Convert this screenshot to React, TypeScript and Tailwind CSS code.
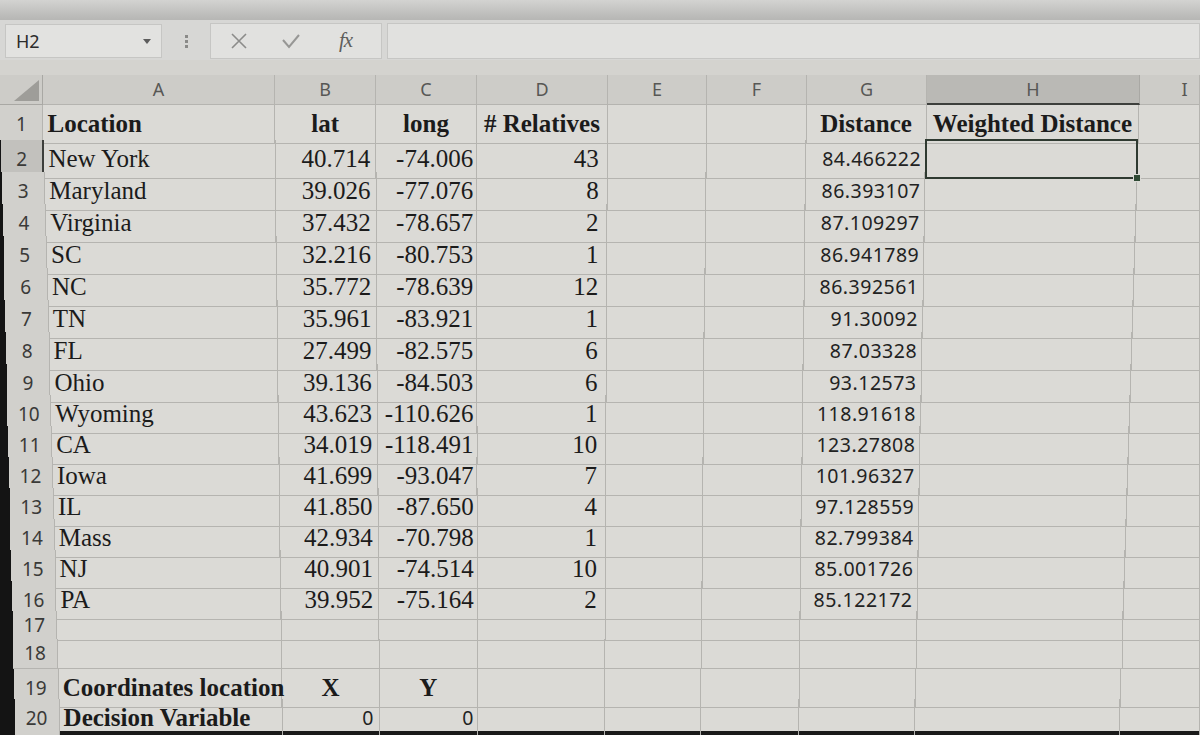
import React from "react";

type Row = {
  n: number;
  h: number;
  a?: string;
  b?: string;
  c?: string;
  d?: string;
  g?: string;
  hh?: string;
  kind?: "head" | "data" | "xy" | "zero";
};

const rows: Row[] = [
  { n: 1, h: 35, a: "Location", b: "lat", c: "long", d: "# Relatives", g: "Distance", hh: "Weighted Distance", kind: "head" },
  { n: 2, h: 32, a: "New York", b: "40.714", c: "-74.006", d: "43", g: "84.466222" },
  { n: 3, h: 32, a: "Maryland", b: "39.026", c: "-77.076", d: "8", g: "86.393107" },
  { n: 4, h: 32, a: "Virginia", b: "37.432", c: "-78.657", d: "2", g: "87.109297" },
  { n: 5, h: 32, a: "SC", b: "32.216", c: "-80.753", d: "1", g: "86.941789" },
  { n: 6, h: 32, a: "NC", b: "35.772", c: "-78.639", d: "12", g: "86.392561" },
  { n: 7, h: 32, a: "TN", b: "35.961", c: "-83.921", d: "1", g: "91.30092" },
  { n: 8, h: 32, a: "FL", b: "27.499", c: "-82.575", d: "6", g: "87.03328" },
  { n: 9, h: 31, a: "Ohio", b: "39.136", c: "-84.503", d: "6", g: "93.12573" },
  { n: 10, h: 31, a: "Wyoming", b: "43.623", c: "-110.626", d: "1", g: "118.91618" },
  { n: 11, h: 31, a: "CA", b: "34.019", c: "-118.491", d: "10", g: "123.27808" },
  { n: 12, h: 31, a: "Iowa", b: "41.699", c: "-93.047", d: "7", g: "101.96327" },
  { n: 13, h: 31, a: "IL", b: "41.850", c: "-87.650", d: "4", g: "97.128559" },
  { n: 14, h: 31, a: "Mass", b: "42.934", c: "-70.798", d: "1", g: "82.799384" },
  { n: 15, h: 31, a: "NJ", b: "40.901", c: "-74.514", d: "10", g: "85.001726" },
  { n: 16, h: 30, a: "PA", b: "39.952", c: "-75.164", d: "2", g: "85.122172" },
  { n: 17, h: 28 },
  { n: 18, h: 30 },
  { n: 19, h: 30, a: "Coordinates location", b: "X", c: "Y", kind: "xy" },
  { n: 20, h: 32, a: "Decision Variable", b: "0", c: "0", kind: "zero" },
];

// the photo is taken at an angle, so column lines drift a little from top to bottom
const topEdges = [0, 43, 275, 376, 477, 608, 707, 807, 927, 1140, 1200];
const botEdges = [15, 60, 283, 380, 478, 605, 701, 799, 915, 1120, 1200];

const colsAt = (y: number) => {
  const t = Math.min(1, Math.max(0, (y - 105) / 625));
  const e = topEdges.map((a, i) => a + (botEdges[i] - a) * t);
  const w = e.map((v, i) => (i === 0 ? v : v - e[i - 1]));
  return w.map((v) => `${v.toFixed(1)}px`).join(" ");
};

const serif = "font-['Liberation_Serif','Times_New_Roman',serif] text-[25px] text-[#1b1b1b]";
const sans = "font-['Noto_Sans',sans-serif] text-[19.5px] tracking-[0.5px] text-[#222]";
const line = "border-r border-b border-[#b5b4b0]";

const Cell = ({ className = "", children }: { className?: string; children?: React.ReactNode }) => (
  <div className={`${line} flex items-center overflow-visible whitespace-nowrap ${className}`}>{children}</div>
);

const ColHeader = () => {
  const letters = ["A", "B", "C", "D", "E", "F", "G", "H", "I"];
  return (
    <div className="grid h-[30px] bg-[#cdccc8]" style={{ gridTemplateColumns: colsAt(90) }}>
      <div />
      <div className="relative border-r border-b border-[#a9a8a4]">
        <svg className="absolute right-[3px] bottom-[3px]" width="25" height="21" viewBox="0 0 25 21">
          <polygon points="25,0 25,21 0,21" fill="#9e9d99" />
        </svg>
      </div>
      {letters.map((l) => (
        <div
          key={l}
          className={`flex items-center justify-center font-['Noto_Sans',sans-serif] text-[18px] text-[#575755] ${
            l === "H"
              ? "bg-[#bab9b5] border-r border-[#a9a8a4] border-b-2 border-b-[#3d3f3c]"
              : "border-r border-b border-[#b5b4b0]"
          } ${l === "I" ? "pl-[30px]" : ""}`}
        >
          {l}
        </div>
      ))}
    </div>
  );
};

const bezelFor = (n: number) => (n < 2 ? "bg-[#d2d1cd]" : "bg-[#141414]");

export default function App() {
  let y = 105;
  return (
    <div className="w-[1200px] h-[735px] overflow-hidden bg-[#1a1a1a] select-none">
      {/* ribbon bottom edge */}
      <div className="h-[20px] bg-gradient-to-b from-[#d3d3d1] via-[#c4c4c2] to-[#b6b6b4]" />

      {/* formula bar */}
      <div className="h-[40px] bg-[#d7d7d5] flex items-start pt-[4px]">
        <div className="ml-[5px] w-[157px] h-[34px] bg-[#e2e2e0] border border-[#c6c6c4] flex items-center justify-between pl-[10px] pr-[10px]">
          <span className="font-['Noto_Sans',sans-serif] text-[18px] text-[#2c2c2c]">H2</span>
          <svg width="8" height="5" viewBox="0 0 8 5">
            <polygon points="0,0 8,0 4,5" fill="#5c5c5c" />
          </svg>
        </div>
        <div className="w-[48px] h-[34px] flex flex-col items-center justify-center gap-[2px]">
          <span className="w-[3px] h-[3px] bg-[#8a8a88]" />
          <span className="w-[3px] h-[3px] bg-[#8a8a88]" />
          <span className="w-[3px] h-[3px] bg-[#8a8a88]" />
        </div>
        <div className="w-[172px] h-[36px] -mt-[1px] bg-[#e1e1df] border border-[#c6c6c4] flex items-center">
          <svg className="ml-[18px]" width="20" height="20" viewBox="0 0 20 20">
            <path d="M3 3 L17 17 M17 3 L3 17" stroke="#8c8c8a" strokeWidth="1.6" fill="none" />
          </svg>
          <svg className="ml-[32px]" width="20" height="18" viewBox="0 0 20 18">
            <path d="M2 8 L8 15 L18 3" stroke="#979795" strokeWidth="2" fill="none" />
          </svg>
          <span className="ml-[38px] font-['Liberation_Serif',serif] italic text-[21px] text-[#5e5e5c] tracking-[-1px]">fx</span>
        </div>
        <div className="ml-[5px] flex-1 h-[36px] -mt-[1px] bg-[#e1e1df] border border-[#c6c6c4]" />
      </div>

      <div className="h-[15px] bg-[#d4d3cf]" />

      <ColHeader />

      {rows.map((r) => {
        const mid = y + r.h / 2;
        y += r.h;
        const isHead = r.kind === "head";
        const bold = isHead || r.kind === "xy" || r.kind === "zero" ? "font-bold" : "";
        return (
          <div key={r.n} className="grid bg-[#dbdad6]" style={{ gridTemplateColumns: colsAt(mid), height: r.h }}>
            <div className={bezelFor(r.n)} />
            <div
              className={`flex items-center justify-center font-['Noto_Sans',sans-serif] text-[19px] text-[#3a3a38] border-r border-b ${
                r.n === 2 ? "bg-[#c2c1bd] border-[#a9a8a4] border-r-2 border-r-[#3d3f3c]" : "bg-[#d1d0cc] border-[#b5b4b0]"
              }`}
            >
              {r.n}
            </div>
            <Cell className={`${serif} ${bold} pl-[4px]`}>{r.a}</Cell>
            <Cell
              className={`${r.kind === "zero" ? sans : `${serif} ${bold}`} ${
                isHead || r.kind === "xy" ? "justify-center" : "justify-end pr-[5px]"
              }`}
            >
              {r.b}
            </Cell>
            <Cell
              className={`${r.kind === "zero" ? sans : `${serif} ${bold}`} ${
                isHead || r.kind === "xy" ? "justify-center" : "justify-end pr-[3px]"
              }`}
            >
              {r.c}
            </Cell>
            <Cell className={`${serif} ${bold} ${isHead ? "justify-center" : "justify-end pr-[8px]"}`}>{r.d}</Cell>
            <Cell />
            <Cell />
            <Cell className={`${isHead ? `${serif} font-bold justify-center` : `${sans} justify-end pr-[4px]`}`}>{r.g}</Cell>
            {r.n === 2 ? (
              <div className="relative border-2 border-[#2f3a31] -ml-[1px] -mt-[1px]">
                <span className="absolute -right-[5px] -bottom-[5px] w-[8px] h-[8px] bg-[#2f4a35] border border-[#dbdad6]" />
              </div>
            ) : (
              <Cell className={`${serif} font-bold justify-center`}>{r.hh}</Cell>
            )}
            <Cell />
          </div>
        );
      })}
    </div>
  );
}
